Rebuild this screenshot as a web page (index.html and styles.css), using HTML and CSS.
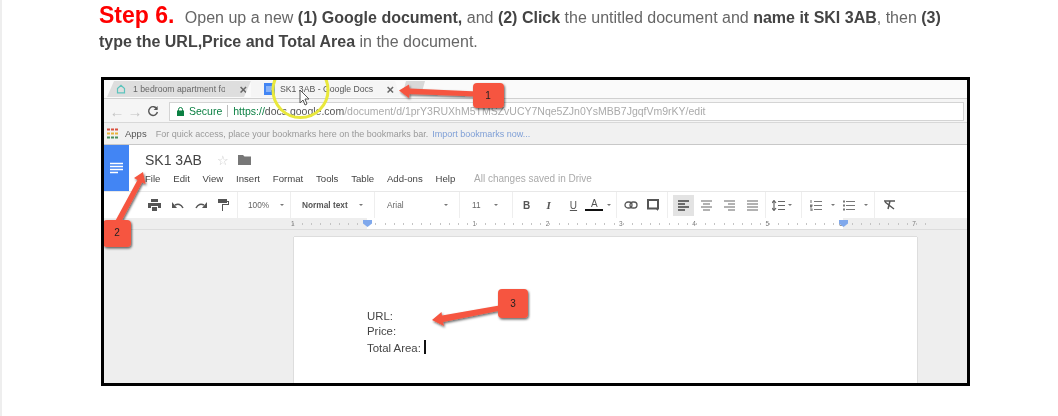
FILE: index.html
```html
<!DOCTYPE html>
<html>
<head>
<meta charset="utf-8">
<link rel="stylesheet" href="styles.css">
<title>Step 6</title>
</head>
<body>
<div class="page">
  <p class="step"><span class="stepno">Step 6.</span> Open up a new <b>(1) Google document,</b> and <b>(2) Click</b> the untitled document and <b>name it SKI 3AB</b>, then <b>(3) type the URL,Price and Total Area</b> in the document.</p>

  <div class="shot">
    <div class="inner">
      <div class="tabs">
        <div class="tab tab1">
          <svg class="ico" width="10" height="10" viewBox="0 0 10 10"><path d="M1.500 4.500 5 1.200l3.500 3.300v4.300h-7z" fill="none" stroke="#5cc4bd" stroke-width="1.200"/></svg>
          <span class="tabname">1 bedroom apartment fo</span>
          <span class="tabx">×</span>
        </div>
        <div class="tab tab2">
          <svg class="ico" width="11" height="12" viewBox="0 0 11 12"><rect width="11" height="12" fill="#4285f4"/><path d="M2 4h7M2 6h7M2 8h5" stroke="#cfe0fb"/></svg>
          <span class="tabname">SK1 3AB - Google Docs</span>
          <span class="tabx">×</span>
        </div>
        <div class="tab tab3"></div>
      </div>

      <div class="urlbar">
        <span class="nav">←</span>
        <span class="nav">→</span>
        <svg class="reload" width="12" height="12" viewBox="0 0 12 12"><path d="M10 4a4.400 4.400 0 1 0 .4 3" fill="none" stroke="#555" stroke-width="1.400"/><path d="M10.600 1v4h-4z" fill="#555"/></svg>
        <div class="omni">
          <svg width="7" height="9" viewBox="0 0 7 9"><rect y="3.500" width="7" height="5.500" fill="#0b8043"/><path d="M1.500 4V2.500a2 2 0 0 1 4 0V4" fill="none" stroke="#0b8043"/></svg>
          <span class="secure">Secure</span>
          <span class="omnisep"></span>
          <span class="url"><span class="https">https://</span><span class="host">docs.google.com</span>/document/d/1prY3RUXhM5TMSZvUCY7Nqe5ZJn0YsMBB7JgqfVm9rKY/edit</span>
        </div>
      </div>

      <div class="bookmarks">
        <svg width="11" height="11" viewBox="0 0 11 11">
          <path d="M0 1.500h3M4 1.500h3M8 1.500h3" stroke="#d9503f" stroke-width="2"/>
          <path d="M0 5.500h3M4 5.500h3M8 5.500h3" stroke="#e8b23a" stroke-width="2"/>
          <path d="M0 9.500h3M4 9.500h3M8 9.500h3" stroke="#4a8f5c" stroke-width="2"/>
        </svg>
        <span class="apps">Apps</span>
        <span class="bmhint">For quick access, place your bookmarks here on the bookmarks bar.</span>
        <span class="bmlink">Import bookmarks now...</span>
      </div>

      <div class="docshead">
        <div class="docicon">
          <svg width="15" height="12" viewBox="0 0 15 12"><path d="M1 1.500h13M1 4.500h13M1 7.500h13M1 10.500h8" stroke="#fff" stroke-width="1.400"/></svg>
        </div>
        <div class="docmain">
          <div class="titlerow">
            <span class="doctitle">SK1 3AB</span>
            <span class="star">☆</span>
            <svg width="13" height="10" viewBox="0 0 13 10"><path d="M0 0h5l1.500 1.500H13V10H0z" fill="#777"/></svg>
          </div>
          <div class="menu">
            <span>File</span><span>Edit</span><span>View</span><span>Insert</span><span>Format</span><span>Tools</span><span>Table</span><span>Add-ons</span><span>Help</span>
            <span class="saved">All changes saved in Drive</span>
          </div>
        </div>
      </div>

      <div class="toolbar">
        <div class="tgroup g-actions">
          <svg width="13" height="12" viewBox="0 0 13 12"><path d="M3 0h7v3H3zM0 4h13v5h-3V7H3v2H0zM4 8h5v4H4z" fill="#555"/></svg>
          <svg width="12" height="8" viewBox="0 0 12 8"><path d="M11 7C9 3 6 2.500 3 4" fill="none" stroke="#555" stroke-width="1.500"/><path d="M0 1v6h5z" fill="#555"/></svg>
          <svg width="12" height="8" viewBox="0 0 12 8"><path d="M1 7C3 3 6 2.500 9 4" fill="none" stroke="#555" stroke-width="1.500"/><path d="M12 1v6H7z" fill="#555"/></svg>
          <svg width="11" height="12" viewBox="0 0 11 12"><path d="M0 0h9v4H0zM9 2h2v4H5v6H4V5h6V3H9z" fill="#555"/></svg>
        </div>
        <div class="tgroup g-zoom"><span>100%</span><i class="caret"></i></div>
        <div class="tgroup g-style"><span class="tb">Normal text</span><i class="caret"></i></div>
        <div class="tgroup g-font"><span>Arial</span><i class="caret"></i></div>
        <div class="tgroup g-size"><span>11</span><i class="caret"></i></div>
        <div class="tgroup g-format">
          <span class="fmt bold">B</span>
          <span class="fmt ital">I</span>
          <span class="fmt under">U</span>
          <span class="fmt color">A</span><i class="caret"></i>
        </div>
        <div class="tgroup g-insert">
          <svg width="14" height="8" viewBox="0 0 14 8"><rect x="1" y="1" width="7" height="6" rx="3" fill="none" stroke="#555" stroke-width="1.300"/><rect x="6" y="1" width="7" height="6" rx="3" fill="none" stroke="#555" stroke-width="1.300"/></svg>
          <svg width="12" height="12" viewBox="0 0 12 12"><path d="M1 1h10v8.500H1z" fill="none" stroke="#555" stroke-width="2"/><path d="M8 9h3v3z" fill="#555"/></svg>
        </div>
        <div class="tgroup g-align">
          <span class="align on"><svg width="11" height="11" viewBox="0 0 11 11"><path d="M0 1h11M0 4h7M0 7h11M0 10h7" stroke="#444" stroke-width="1.300"/></svg></span>
          <span class="align"><svg width="11" height="11" viewBox="0 0 11 11"><path d="M0 1h11M2 4h7M0 7h11M2 10h7" stroke="#666" stroke-width="1.200"/></svg></span>
          <span class="align"><svg width="11" height="11" viewBox="0 0 11 11"><path d="M0 1h11M4 4h7M0 7h11M4 10h7" stroke="#666" stroke-width="1.200"/></svg></span>
          <span class="align"><svg width="11" height="11" viewBox="0 0 11 11"><path d="M0 1h11M0 4h11M0 7h11M0 10h11" stroke="#666" stroke-width="1.200"/></svg></span>
        </div>
        <div class="tgroup g-spacing">
          <svg width="13" height="11" viewBox="0 0 13 11"><path d="M2 1v9M0 3l2-2.500L4 3M0 8l2 2.500L4 8M6 1.500h7M6 5.500h7M6 9.500h7" fill="none" stroke="#666" stroke-width="1.200"/></svg><i class="caret"></i>
        </div>
        <div class="tgroup g-lists">
          <svg width="12" height="11" viewBox="0 0 12 11"><path d="M4 1.500h8M4 5.500h8M4 9.500h8M1 0v3M0 5h2v1H0v1h2M0 9h2v2H0" fill="none" stroke="#777" stroke-width="1.100"/></svg><i class="caret"></i>
          <svg width="12" height="11" viewBox="0 0 12 11"><path d="M3 1.500h9M3 5.500h9M3 9.500h9" stroke="#777" stroke-width="1.200"/><path d="M0 .5h2v2H0zM0 4.500h2v2H0zM0 8.500h2v2H0z" fill="#777"/></svg><i class="caret"></i>
        </div>
        <div class="tgroup g-clear">
          <svg width="12" height="10" viewBox="0 0 12 10"><path d="M0 1h11M6 1 4 9M1 2l9 7" fill="none" stroke="#555" stroke-width="1.500"/></svg>
        </div>
      </div>

      <div class="ruler">
        <span class="rnum rnum-first">1</span><span class="rnum">1</span><span class="rnum">2</span><span class="rnum">3</span><span class="rnum">4</span><span class="rnum">5</span><span class="rnum">6</span><span class="rnum">7</span>
        <i class="rmark rmark-l"></i>
        <i class="rmark rmark-r"></i>
      </div>

      <div class="canvas">
        <div class="sheet">
          <div class="lines">
            <div>URL:</div>
            <div>Price:</div>
            <div>Total Area: <span class="cursor"></span></div>
          </div>
        </div>
      </div>

      <svg class="marks" width="863" height="303" viewBox="104 80 863 303">
        <defs>
          <filter id="sh" x="-20%" y="-20%" width="140%" height="140%"><feDropShadow dx="1" dy="1.500" stdDeviation="1" flood-color="#000" flood-opacity=".6"/></filter>
        </defs>
        <circle cx="300.500" cy="90" r="27.500" fill="none" stroke="#e9e83c" stroke-width="3"/>
        <path d="M300 90v13l3-3 2 5 2-1-2-5h4z" fill="#fff" stroke="#555"/>
        <g filter="url(#sh)" fill="#f6553f">
          <path d="M399 90.500 409 84.500l.5 4 68 3v5l-68-2.500-.500 4z"/>
          <rect x="473" y="83" width="31" height="25" rx="4"/>
          <path d="M143 172l2.500 12-3.500-1.500L120 224l-5-2.500 22.500-41.500-3.500-2z"/>
          <rect x="103" y="220" width="28" height="27" rx="4"/>
          <path d="M432 320l9.500-8 .5 3.500 60-10.500 1 5-60 12 1 4z"/>
          <rect x="498" y="289" width="30" height="29" rx="4"/>
        </g>
        <text class="marknum" x="488" y="99">1</text>
        <text class="marknum" x="117" y="236">2</text>
        <text class="marknum" x="513" y="307">3</text>
      </svg>
    </div>
  </div>
</div>
</body>
</html>
```
FILE: styles.css
```css
*{box-sizing:border-box;}
html,body{margin:0;padding:0;background:#fff;}
body{font-family:"Liberation Sans",Arial,sans-serif;}
.page{width:1058px;height:416px;overflow:hidden;border-left:2px solid #eee;padding:0 0 0 97px;}

.step{margin:0;padding-top:3px;width:860px;font-size:16px;line-height:24px;color:#666;filter:blur(.3px);}
.step b{color:#444;}
.stepno{font-size:23px;font-weight:bold;color:#f00;margin-right:6px;}

.shot{margin-top:23px;margin-left:2px;width:869px;height:309px;border:3px solid #000;background:#fff;overflow:hidden;}
.inner{position:relative;width:863px;height:303px;font-size:9px;color:#666;}
.inner > div{filter:blur(.45px);}
.marks{filter:blur(.3px);}

.tabs{display:flex;align-items:flex-end;height:19px;padding:0 0 1px 3px;background:#fafafa;border-bottom:1px solid #d0d0d0;}
.tab{display:flex;align-items:center;height:16px;font-size:8.700px;}
.tab .ico{flex:none;}
.tabname{margin-left:5px;white-space:nowrap;overflow:hidden;}
.tabx{margin-left:auto;font-size:13px;font-weight:bold;color:#666;}
.tab1{width:144px;padding:0 4px 0 9px;background:#dedede;clip-path:polygon(7px 0,100% 0,calc(100% - 7px) 100%,0 100%);}
.tab1 .tabname{width:92px;margin-left:7px;}
.tab2{width:149px;padding:0 6px 0 13px;background:#f5f5f5;clip-path:polygon(0 0,calc(100% - 5px) 0,100% 100%,0 100%);margin-right:3px;color:#555;}
.tab3{width:22px;height:11px;margin-bottom:5px;background:#d8d8d8;clip-path:polygon(3px 0,100% 0,calc(100% - 3px) 100%,0 100%);}

.urlbar{display:flex;align-items:center;height:24px;padding:1px 3px 0 4px;background:#f5f5f5;border-bottom:1px solid #d8d8d8;}
.nav{width:18px;font-size:15px;color:#c4c4c4;text-align:center;}
.reload{margin:0 10px 0 3px;}
.omni{display:flex;align-items:center;flex:1;gap:5px;height:19px;padding-left:7px;background:#fff;border:1px solid #d4d4d4;font-size:10.500px;white-space:nowrap;overflow:hidden;}
.secure{color:#0b8043;}
.omnisep{width:1px;height:12px;background:#bbb;}
.url{color:#aaa;}
.https{color:#0b8043;}
.host{color:#555;}

.bookmarks{display:flex;align-items:center;height:22px;padding-left:3px;background:#f1f1f1;border-bottom:1px solid #c8c8c8;font-size:9px;color:#999;white-space:nowrap;}
.apps{margin:0 9px 0 7px;color:#555;font-size:9.500px;}
.bmlink{margin-left:4px;color:#7f9fd6;}

.docshead{display:flex;height:46px;background:#fff;}
.docicon{display:flex;align-items:center;justify-content:center;width:25px;background:#4285f4;}
.docmain{padding-left:16px;flex:1;}
.titlerow{display:flex;align-items:center;height:28px;padding-top:2px;}
.doctitle{width:72px;font-size:14px;color:#444;}
.star{width:21px;font-size:13px;color:#ccc;}
.menu{display:flex;gap:12.800px;font-size:9.600px;color:#444;white-space:nowrap;}
.saved{margin-left:6px;font-size:10px;color:#aaa;}

.toolbar{display:flex;align-items:center;height:27px;padding-left:37px;background:#fff;border-top:1px solid #e8e8e8;font-size:8.300px;color:#666;}
.tgroup{display:flex;align-items:center;height:26px;border-right:1px solid #eee;}
.caret{flex:none;width:0;height:0;margin-left:auto;border:2px solid transparent;border-top:2.500px solid #777;border-bottom:0;}
.g-actions{width:97px;gap:11px;padding-left:7px;}
.g-zoom{width:53px;padding:0 6px 0 10px;}
.g-style{width:84px;padding:0 11px 0 11px;}
.g-font{width:85px;padding:0 11px 0 12px;}
.g-size{width:53px;padding:0 14px 0 12px;}
.g-format{width:104px;padding:0 5px 0 10px;gap:0;}
.tb{font-weight:bold;color:#555;}
.fmt{width:24px;font-size:10px;font-weight:bold;color:#555;}
.ital{font-family:"Liberation Serif",serif;font-style:italic;font-size:11px;}
.under{width:16px;text-decoration:underline;font-weight:normal;}
.color{width:18px;border-bottom:2.500px solid #111;font-weight:normal;text-align:center;line-height:10px;}
.g-format .caret{margin-left:4px;}
.g-insert{width:51px;gap:9px;padding-left:7px;}
.g-align{width:98px;padding-left:5px;gap:2px;}
.align{display:flex;align-items:center;justify-content:center;width:21px;height:21px;}
.align.on{background:#e3e3e3;}
.g-spacing{width:36px;padding:0 9px 0 6px;}
.g-lists{width:73px;padding-left:8px;}
.g-lists .caret{margin:0 8px 0 9px;}
.g-lists .caret:last-of-type{margin-right:0;}
.g-clear{padding-left:9px;border:0;}

.ruler{position:relative;display:flex;height:12px;padding-left:187px;font-size:6.500px;line-height:11px;color:#777;border-bottom:1px solid #ddd;
  background:repeating-linear-gradient(90deg,#c4c4c4 0,#c4c4c4 1px,transparent 1px,transparent 9.160px) 189px center/637px 2px no-repeat,linear-gradient(90deg,#eee 263px,#fff 263px,#fff 739px,#eee 739px);}
.rnum{flex:none;width:73.300px;text-align:center;}
.rnum-first{width:146.600px;text-align:left;}
.rmark{position:absolute;top:2px;width:9px;height:7px;clip-path:polygon(0 0,100% 0,100% 50%,50% 100%,0 50%);background:#7fa8ec;}
.rmark-l{left:259px;}
.rmark-r{left:735px;}

.canvas{height:153px;padding:7px 0 0 190px;background:#eee;}
.sheet{width:623px;height:146px;padding:72px 0 0 73px;background:#fff;box-shadow:-1px 0 0 #ddd,1px 0 0 #ddd,0 -1px 0 #ddd;font-size:11.400px;line-height:15.300px;color:#444;}
.lines{white-space:nowrap;}
.cursor{display:inline-block;width:2px;height:14px;vertical-align:-2px;background:#111;}

.marks{position:absolute;left:0;top:0;}
.marknum{font-size:10px;fill:#222;text-anchor:middle;}
```
